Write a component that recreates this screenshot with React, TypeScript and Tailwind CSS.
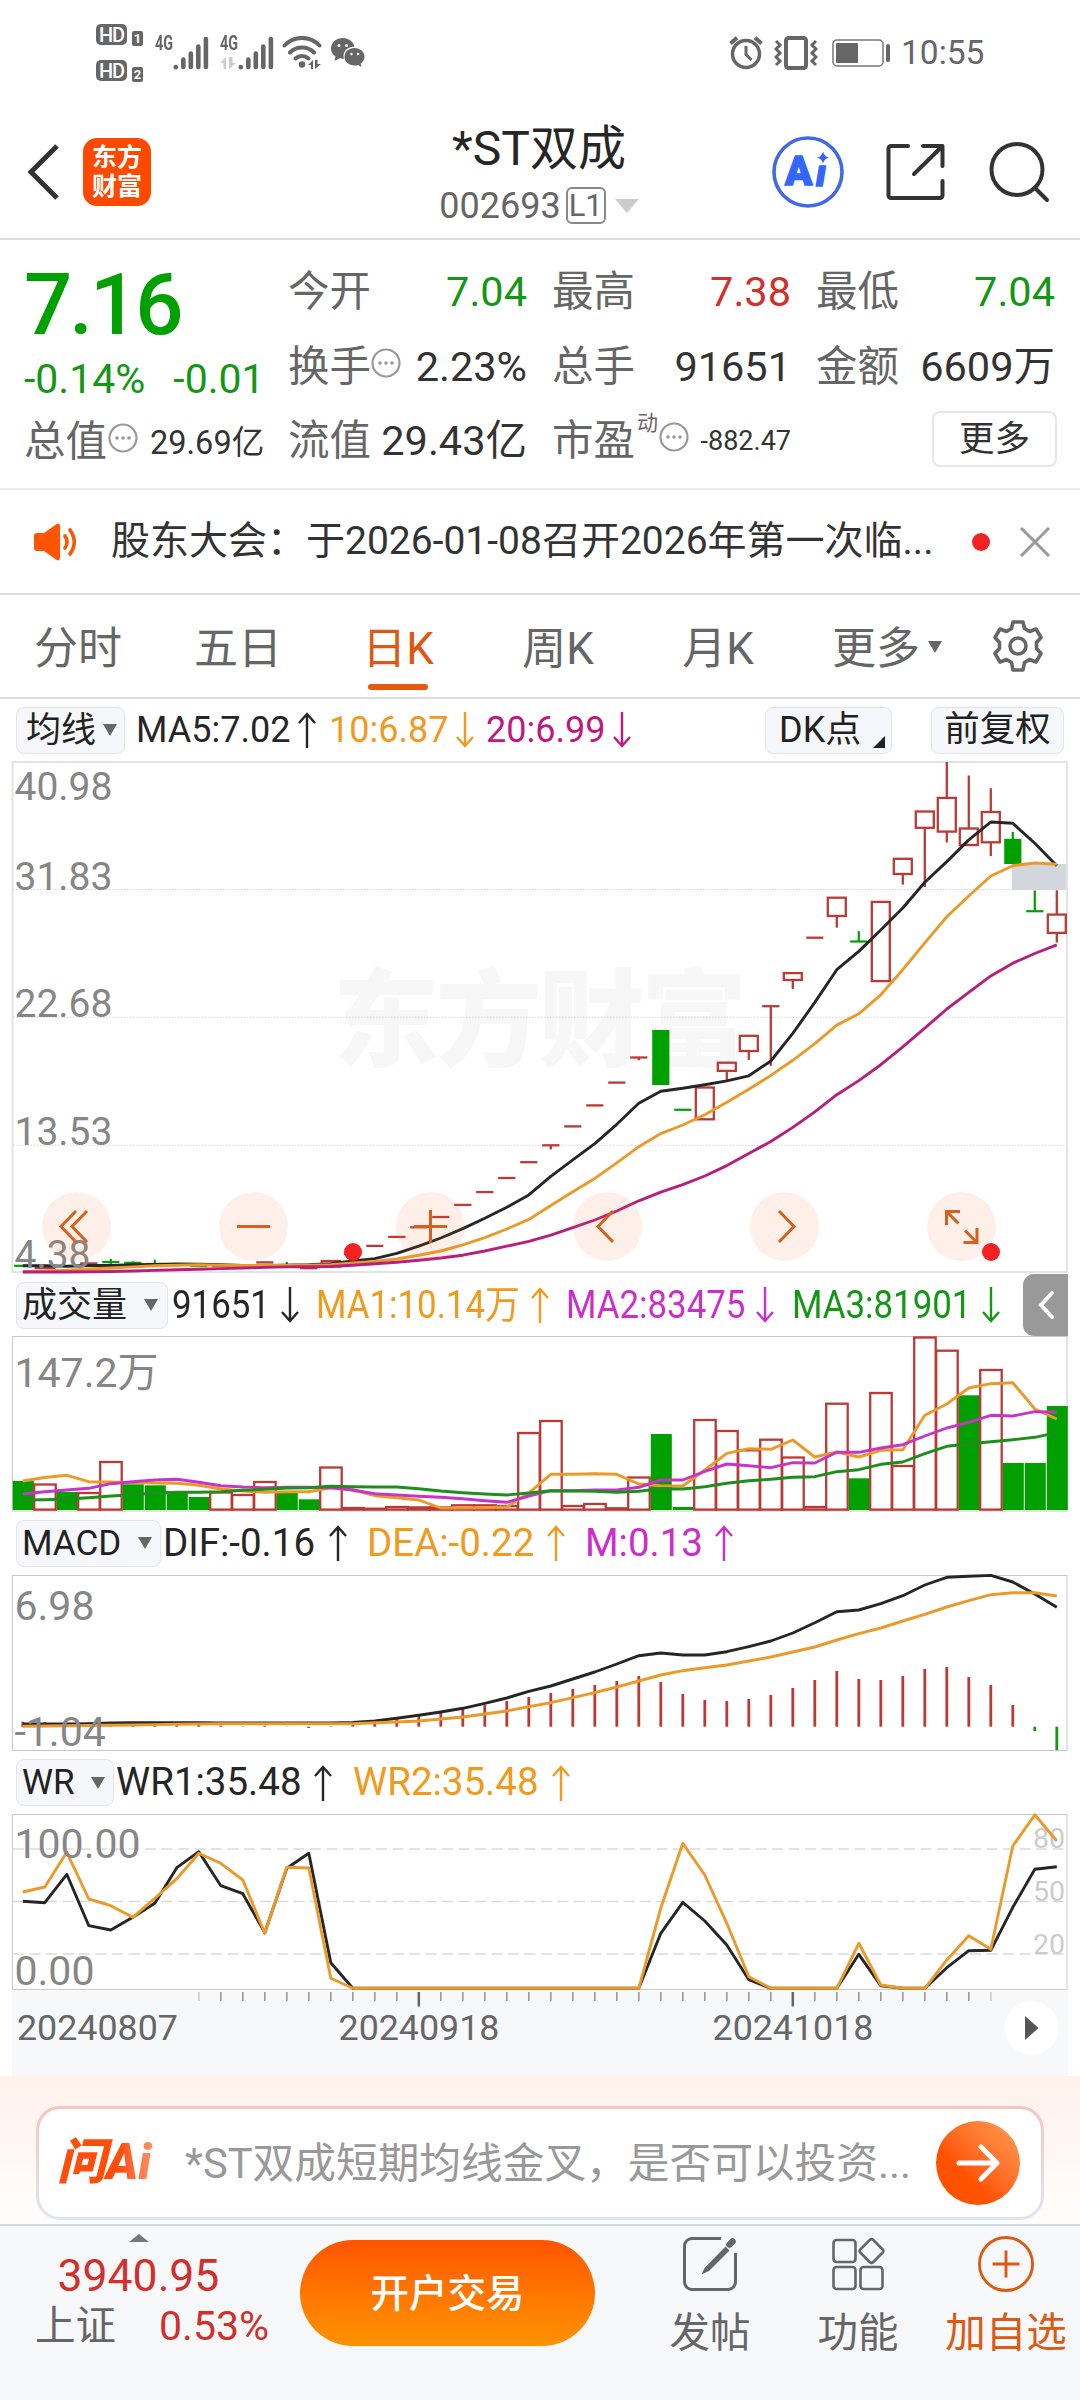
import type { ReactNode } from "react";

const X0 = 22.8;
const STEP = 22;
const cx = (i: number) => X0 + STEP * i;

const RED = "#bb3a36";
const GREEN = "#00a000";
const BLACK = "#262626";
const ORANGE = "#eb9a2a";
const MAGENTA = "#b81e7c";
const PURPLE = "#c735c7";

// [index, up, bodyTop, bodyBottom, high, low]
type Candle = [number, boolean, number, number, number, number];

const candles: Candle[] = [
  [0, false, 1265.8, 1265.8, 1265.8, 1265.8],
  [1, true, 1266, 1268, 1266, 1268],
  [2, false, 1265.5, 1267, 1265.5, 1267],
  [3, true, 1263.4, 1263.4, 1263.4, 1263.4],
  [4, false, 1262, 1262, 1259, 1265],
  [5, false, 1262.8, 1262.8, 1261.5, 1264],
  [6, false, 1264, 1264, 1259.6, 1266],
  [7, false, 1265, 1265, 1263, 1266],
  [8, false, 1266, 1266.6, 1266, 1267],
  [9, true, 1266, 1266, 1266, 1266],
  [10, true, 1265.5, 1265.5, 1265.5, 1265.5],
  [11, true, 1262.4, 1263, 1262.4, 1263],
  [12, false, 1265, 1265, 1262, 1266],
  [13, true, 1268.2, 1268.2, 1268.2, 1268.2],
  [14, true, 1261, 1266.5, 1261, 1266.5],
  [15, true, 1254, 1254, 1254, 1254],
  [16, true, 1245.9, 1245.9, 1245.9, 1245.9],
  [17, true, 1236.9, 1236.9, 1236.9, 1236.9],
  [18, true, 1227.3, 1227.3, 1227.3, 1227.3],
  [19, true, 1217, 1217, 1217, 1217],
  [20, true, 1204.9, 1204.9, 1204.9, 1204.9],
  [21, true, 1192.1, 1192.1, 1192.1, 1192.1],
  [22, true, 1178, 1178, 1178, 1178],
  [23, true, 1162.2, 1162.2, 1162.2, 1162.2],
  [24, true, 1145.3, 1145.3, 1145.3, 1149.4],
  [25, true, 1126.4, 1126.4, 1126.4, 1126.4],
  [26, true, 1105.4, 1105.4, 1105.4, 1105.4],
  [27, true, 1082.6, 1082.6, 1082.6, 1082.6],
  [28, true, 1057.5, 1057.5, 1057.5, 1060.3],
  [29, false, 1030, 1085, 1030, 1085],
  [30, false, 1109.8, 1109.8, 1109.8, 1109.8],
  [31, true, 1087.5, 1119.3, 1087.5, 1119.3],
  [32, true, 1062.7, 1070.9, 1062.7, 1079.9],
  [33, true, 1035.8, 1051, 1035.8, 1059.9],
  [34, true, 1006.2, 1006.2, 1006.2, 1065.8],
  [35, true, 973.1, 980, 973.1, 989],
  [36, true, 937.7, 937.7, 937.7, 937.7],
  [37, true, 897.7, 916, 897.7, 927.7],
  [38, false, 941.5, 941.5, 931.1, 941.5],
  [39, true, 901.9, 981.1, 901.9, 981.1],
  [40, true, 858.8, 874, 858.8, 884.6],
  [41, true, 811.5, 827.8, 811.5, 887],
  [42, true, 797.9, 831.6, 762, 842.6],
  [43, true, 828.5, 845, 775.5, 845],
  [44, true, 812, 842.3, 788.2, 856],
  [45, false, 838.8, 864, 832, 864],
  [46, false, 911.2, 911.2, 890.5, 911.2],
  [47, true, 914.6, 932.9, 890.2, 942.5],
];

const ma5 = [
  1265.8, 1265.6, 1266.2, 1265.5, 1265.5, 1264.8, 1264.5, 1264, 1264.2, 1264.8, 1265.5, 1265.5, 1265.2, 1264.8, 1263.8,
  1261, 1258.6, 1253.4, 1246.2, 1238, 1228.6, 1218.3, 1207.3, 1194.9, 1176.3, 1159.8, 1143.6, 1124.3, 1103.3, 1091.2,
  1088.2, 1084.7, 1080.9, 1075.8, 1061, 1033.4, 1002.4, 969.7, 951.4, 930, 908, 882.2, 861.6, 839.9, 822, 823.3, 843.3,
  865.7,
];
const ma10 = [
  1271.7, 1271, 1270.3, 1269, 1268, 1266.9, 1265.8, 1265.2, 1264.8, 1265.2, 1265.5, 1265.5, 1265.5, 1265.2, 1264.8, 1263,
  1261.4, 1259, 1255.2, 1251, 1244.8, 1237.6, 1229, 1219.4, 1205.6, 1191.8, 1178.4, 1162.9, 1146.7, 1133.6, 1125, 1114.7,
  1102.3, 1089.2, 1075.4, 1060.3, 1043.7, 1025.1, 1013.8, 994.8, 969.7, 942.8, 916.7, 896, 876, 865.7, 863, 864.3,
];
const ma20 = [
  1272, 1272, 1272, 1271.8, 1271.5, 1271, 1270.4, 1269.8, 1269.3, 1268.6, 1268, 1267.4, 1266.9, 1266.7, 1266.5, 1265.2,
  1263.8, 1262.2, 1260.3, 1258, 1255.2, 1251, 1246.2, 1241.4, 1235.2, 1227.6, 1220, 1211, 1200.8, 1192.1, 1184.6, 1176,
  1165.6, 1153.6, 1141.5, 1127.4, 1111.9, 1094.7, 1080.6, 1064.7, 1046.8, 1028.2, 1009, 992.4, 975.9, 963.2, 953.5, 944.9,
];

// volume bars: top of bar, true = hollow red
const volumes: [number, boolean][] = [
  [1481, false], [1484.5, true], [1492, false], [1493, true], [1462, true], [1484.3, false], [1485.3, false],
  [1491, false], [1497, false], [1492.5, true], [1495, true], [1482, true], [1492, false], [1499.3, false],
  [1467.5, true], [1508, true], [1508.7, true], [1507, true], [1507.4, true], [1507.4, true], [1505.3, true],
  [1505.3, true], [1506, true], [1433, true], [1421, true], [1506, true], [1504, true], [1508.3, true],
  [1477.5, true], [1434, false], [1507, false], [1420, true], [1431, true], [1450.3, true], [1439.7, true],
  [1457.5, true], [1507, true], [1403.7, true], [1478.3, false], [1393, true], [1466, true], [1335, true],
  [1350.7, true], [1395.3, false], [1370, true], [1463, false], [1463, false], [1406, false],
];
const vma1 = [
  1481, 1477.5, 1475.3, 1481.7, 1482, 1482.6, 1483, 1483.3, 1485.3, 1489, 1491, 1492.3, 1491.7, 1491.7, 1487.7, 1490,
  1495.7, 1497.7, 1500, 1508, 1508, 1507.7, 1507, 1493, 1474.3, 1474.3, 1473.7, 1474.3, 1484, 1485.7, 1486, 1470, 1453.3,
  1448.7, 1449.3, 1440, 1457, 1452, 1457, 1450.3, 1449.7, 1415.3, 1404, 1388, 1383.7, 1382.7, 1409, 1419,
];
const vma2 = [
  1494, 1491.7, 1490, 1488.3, 1483.7, 1481.7, 1480, 1479.3, 1482.3, 1485.7, 1487, 1487.7, 1487.3, 1487.3, 1487.7, 1490,
  1493.7, 1495, 1496.3, 1497.3, 1498.7, 1500.7, 1502.3, 1496, 1490.7, 1490.7, 1490, 1490, 1487.3, 1480, 1480, 1471.3,
  1464, 1465.7, 1467.7, 1462.7, 1463, 1452.3, 1452.3, 1448, 1444.7, 1436, 1428, 1422.3, 1415.3, 1416, 1411.7, 1412,
];
const vma3 = [
  1500, 1499.7, 1499, 1497.7, 1496, 1494.7, 1493.3, 1492.3, 1492.3, 1491.7, 1490.3, 1489.3, 1488, 1487.7, 1486.3, 1486.7,
  1487, 1487, 1488.7, 1491, 1492.7, 1494, 1495, 1493, 1490.7, 1491, 1491.3, 1492.3, 1491.3, 1488.7, 1489, 1486.7, 1483.3,
  1480.7, 1479.3, 1477.3, 1476.7, 1471.7, 1469.7, 1464.3, 1462, 1453.7, 1446.3, 1444, 1441.7, 1439.7, 1437.3, 1432.7,
];

const dif = [
  1724, 1724, 1724, 1723.6, 1723, 1722.8, 1722.7, 1722.7, 1722.7, 1723, 1723, 1723, 1723, 1723, 1723, 1722.5, 1721,
  1718.3, 1715.3, 1712, 1708.3, 1703.3, 1698, 1691.3, 1686, 1679, 1672, 1664, 1655.7, 1653, 1655, 1655, 1651.7, 1646.7,
  1641, 1633, 1622.7, 1611.7, 1610, 1603.7, 1595.7, 1585, 1577.3, 1576.3, 1575.4, 1582, 1594, 1607.3,
];
const dea = [
  1726.3, 1726, 1725.8, 1725.5, 1725.3, 1725, 1724.6, 1724.2, 1724, 1723.8, 1723.7, 1723.7, 1723.7, 1723.7, 1723.7,
  1723.7, 1722.7, 1722, 1721, 1719, 1717, 1714, 1711, 1706.7, 1702.7, 1697.7, 1692.7, 1687, 1681, 1675, 1670.7, 1667.7,
  1665, 1661, 1657, 1652, 1647, 1640, 1633.7, 1628, 1621, 1614.3, 1607, 1600.7, 1594.7, 1592.7, 1592.7, 1596,
];
const ZERO = 1726.7;
const hist = [
  1721.7, 1722.3, 1724, 1723.6, 1723.8, 1724, 1724, 1724.3, 1724.8, 1725.5, 1726.4, 1725.7, 1726.5, 1728, 1726.4, 1725,
  1722, 1719.3, 1716, 1712, 1709, 1705, 1701, 1697, 1693, 1689, 1685, 1681, 1676, 1682, 1694, 1700, 1701, 1699, 1695,
  1688, 1680, 1671, 1679, 1680, 1676, 1669, 1667, 1677, 1685, 1705, 1731, 1750,
];

const B = 1988.3;
const wr1 = [
  1901.3, 1902.7, 1874.3, 1925.7, 1930, 1917.3, 1903.3, 1867.7, 1851.7, 1885.7, 1893.7, 1932.7, 1868.3, 1853.3, 1962.7,
  B, B, B, B, B, B, B, B, B, B, B, B, B, B, 1933.3, 1902.3, 1921, 1945, 1979.7, B, B, B, B, 1954.3, 1985.7, B, B, 1967.7,
  1950.7, 1950.3, 1907.3, 1869.3, 1866.7,
];
const wr2 = [
  1892, 1887, 1852.3, 1899, 1905.7, 1917.3, 1898.3, 1878.7, 1853.3, 1863.3, 1880, 1933.3, 1867.3, 1868, 1978.3, B, B, B,
  B, B, B, B, B, B, B, B, B, B, B, 1908, 1843.3, 1875, 1923.3, 1976.7, B, B, B, B, 1943.3, 1985, B, B, 1960, 1935.7,
  1949.3, 1846, 1814.8, 1841,
];

function Line({ data, color, width = 2.9 }: { data: number[]; color: string; width?: number }) {
  const points = data.map((y, i) => `${cx(i)},${y}`).join(" ");
  return <polyline points={points} fill="none" stroke={color} strokeWidth={width} strokeLinejoin="round" />;
}

function AxisLabel({ x = 14.5, y, size = 41, children }: { x?: number; y: number; size?: number; children: ReactNode }) {
  return (
    <text x={x} y={y} fontSize={size} fill="#868686">
      {children}
    </text>
  );
}

function Arrow({ up }: { up?: boolean }) {
  return (
    <svg viewBox="0 0 18 36" className="h-9 w-[18px] shrink-0" fill="none" stroke="currentColor" strokeWidth="2.4">
      {up ? <path d="M9 36V2M1 11l8-9 8 9" /> : <path d="M9 0v34M1 25l8 9 8-9" />}
    </svg>
  );
}

function Reading({ text, up, className, narrow }: { text: string; up?: boolean; className: string; narrow?: boolean }) {
  return (
    <div className={`flex items-center ${className}`}>
      <div className="w-0 flex-1 whitespace-nowrap">
        <span className={narrow ? "inline-block origin-left scale-x-[0.905]" : ""}>{text}</span>
      </div>
      <Arrow up={up} />
    </div>
  );
}

function Picker({ label, className }: { label: string; className: string }) {
  return (
    <button
      className={`mr-1 flex h-[47px] shrink-0 items-center justify-between rounded-lg border-[1.5px] border-[#e1e4ea] bg-[#f5f7fa] text-[35px] leading-none text-[#222] ${className}`}
    >
      {label}
      <svg viewBox="0 0 14 12" className="h-3 w-3.5" fill="#666">
        <path d="M0 0h14L7 12z" />
      </svg>
    </button>
  );
}

function More() {
  return (
    <svg viewBox="0 0 30 30" className="h-[30px] w-[30px] shrink-0">
      <circle cx="15" cy="15" r="13.5" fill="none" stroke="#999" strokeWidth="2.2" />
      <circle cx="9" cy="15" r="1.8" fill="#999" />
      <circle cx="15" cy="15" r="1.8" fill="#999" />
      <circle cx="21" cy="15" r="1.8" fill="#999" />
    </svg>
  );
}

function Signal() {
  return (
    <svg viewBox="0 0 36 34" className="h-[34px] w-9" stroke="#666" strokeWidth="4.6" strokeLinecap="round">
      <path d="M2.8 31v.2M10.3 23.5V31M17.8 17.5V31M25.3 10.5V31M32.9 3v28" />
    </svg>
  );
}

function HdBadge({ n }: { n: number }) {
  return (
    <div className="flex items-end gap-[5px]">
      <span className="flex h-[21px] w-[31px] items-center justify-center rounded-[5px] bg-[#666] text-[20px] leading-none font-medium tracking-[-1px] text-white">
        HD
      </span>
      <span className="-mb-px flex h-[15px] w-[11px] items-center justify-center rounded-[2px] bg-[#666] text-[13px] leading-none font-bold text-white">
        {n}
      </span>
    </div>
  );
}

function StatusBar() {
  return (
    <div className="flex h-[106px] items-start text-[#666]">
      <div className="mt-6 ml-24 flex flex-col gap-[15px]">
        <HdBadge n={1} />
        <HdBadge n={2} />
      </div>
      <div className="mt-9 ml-3 flex">
        <span className="w-[18px] origin-left scale-x-[0.72] text-[20px] leading-[15px] font-bold">4G</span>
        <Signal />
      </div>
      <div className="mt-9 ml-[11px] flex">
        <div className="w-[18px]">
          <span className="block origin-left scale-x-[0.72] text-[20px] leading-[15px] font-bold">4G</span>
          <svg viewBox="0 0 16 12" className="mt-[6px] h-3 w-4" fill="#ccc">
            <path d="M0 6l6-6v12H3.5V6zM9 0v12l7-6h-3.500V0z" />
          </svg>
        </div>
        <Signal />
      </div>
      <svg viewBox="0 0 40 34" className="mt-9 ml-2 h-[34px] w-10" fill="none" stroke="#666" strokeWidth="4" strokeLinecap="round">
        <path d="M2.500 9.500a24 24 0 0 1 35 0M8 16.500a17 17 0 0 1 24 0M13.500 22.500a9.500 9.500 0 0 1 13 0" />
        <circle cx="20" cy="28.500" r="3.200" fill="#666" stroke="none" />
        <path d="M26 29l5-5v9h-2v-4zM33 24v9l6-5h-3.500v-4z" fill="#666" stroke="none" />
      </svg>
      <svg viewBox="0 0 34 30" className="mt-[38px] ml-[9px] h-[30px] w-[34px]" fill="#666">
        <path d="M12 0C5 0 0 4.700 0 10.500c0 3.500 1.800 6 4.500 8L3.500 23l5-2.700c2 .5 4 .5 4.500.4C11 14 16 8.500 23.500 8.700 22.500 3.500 17.500 0 12 0z" />
        <path d="M23.500 10c-5.600 0-10 3.800-10 8.700s4.400 8.800 10 8.800c1.300 0 2.500-.2 3.600-.6l3.400 2.100-.8-3.500c2.300-1.600 3.800-4 3.800-6.800 0-4.900-4.400-8.700-10-8.700z" />
        <circle cx="8" cy="7.500" r="1.500" fill="#fff" />
        <circle cx="15.500" cy="7.500" r="1.500" fill="#fff" />
        <circle cx="20.500" cy="16" r="1.200" fill="#fff" />
        <circle cx="27" cy="16" r="1.200" fill="#fff" />
      </svg>
      <div className="flex-1" />
      <svg viewBox="0 0 34 34" className="mt-9 h-[34px] w-[34px]" fill="none" stroke="#666" strokeWidth="3.500">
        <circle cx="17" cy="18" r="13.500" />
        <path d="M17 10v8.500l5.500 5.500" strokeWidth="3" />
        <path d="M1.500 7.500L8 1.800M32.500 7.500L26 1.800" strokeWidth="4" />
      </svg>
      <svg viewBox="0 0 44 34" className="mt-9 ml-[11px] h-[34px] w-11" fill="none" stroke="#666">
        <rect x="12" y="2" width="20" height="30" rx="2.500" strokeWidth="4" />
        <path d="M2 5l4 4-4 4 4 4-4 4 4 4-4 4M42 5l-4 4 4 4-4 4 4 4-4 4 4 4" strokeWidth="3" />
      </svg>
      <svg viewBox="0 0 58 28" className="mt-[39px] ml-[14px] h-7 w-[58px]" fill="#666">
        <rect x="1" y="1" width="50" height="26" rx="4" fill="none" stroke="#777" strokeWidth="1.500" />
        <rect x="4" y="4" width="22" height="20" rx="1" />
        <rect x="54" y="5" width="4" height="18" rx="2" />
      </svg>
      <span className="mt-9 mr-[97px] ml-[11px] w-[82px] text-[33.500px] leading-[34px]">10:55</span>
    </div>
  );
}

function Header() {
  return (
    <header className="flex h-[134px] items-center border-b-2 border-[#dcdcdc] pl-[26px]">
      <svg viewBox="0 0 34 56" className="h-14 w-[34px]" fill="none" stroke="#333" strokeWidth="5">
        <path d="M31 2L5 28l26 26" />
      </svg>
      <div className="ml-[23px] flex h-[68px] w-[68px] flex-col items-center justify-center rounded-[14px] bg-[#ff4800] text-[25px] leading-[29px] font-bold text-white">
        <span>东方</span>
        <span>财富</span>
      </div>
      <div className="ml-[241px] flex w-[294px] flex-col items-center pt-[9px]">
        <h1 className="text-[48px] leading-[58px] text-[#262626]">*ST双成</h1>
        <div className="flex h-[56px] items-center text-[#666]">
          <span className="text-[36px]">002693</span>
          <span className="ml-[5px] flex h-[37px] w-[40px] items-center justify-center rounded-md border-2 border-[#888] text-[31px] leading-none">
            L1
          </span>
          <svg viewBox="0 0 24 14" className="ml-[9px] h-3.5 w-6" fill="#ccc">
            <path d="M0 0h24L12 14z" />
          </svg>
        </div>
      </div>
      <svg viewBox="0 0 74 74" className="ml-[85px] h-[74px] w-[74px]">
        <circle cx="37" cy="37" r="34" fill="none" stroke="#4169e1" strokeWidth="3.600" />
        <text x="14" y="50" fontSize="40" fontWeight="900" fill="#3366ff" stroke="#3366ff" strokeWidth="1.500">
          A
        </text>
        <text x="45" y="51" fontSize="36" fontWeight="900" fontStyle="italic" fill="#3366ff" stroke="#3366ff" strokeWidth="1.500">
          ı
        </text>
        <path d="M52 16.500q1.500 5.500 6 6-4.500 1-6 6-1.500-5-6-6 4.500-.5 6-6z" fill="#3366ff" />
      </svg>
      <svg viewBox="0 0 60 60" className="ml-[40px] h-[60px] w-[60px]" fill="none" stroke="#333" strokeWidth="4" strokeLinecap="round" strokeLinejoin="round">
        <path d="M23 4H6a2.500 2.500 0 0 0-2.500 2.500v47A2.500 2.500 0 0 0 6 56h49a2.500 2.500 0 0 0 2.500-2.500V39" />
        <path d="M38 4h19.500v20M57 4.500L29 32" />
      </svg>
      <svg viewBox="0 0 62 62" className="ml-[43px] h-[62px] w-[62px]" fill="none" stroke="#333" strokeWidth="4" strokeLinecap="round">
        <circle cx="29" cy="28.500" r="25.500" />
        <path d="M47 47l12 12" />
      </svg>
    </header>
  );
}

function Cell({ label, value, color = "text-[#333]", more }: { label: string; value: string; color?: string; more?: boolean }) {
  return (
    <div className="flex h-[74.5px] w-[239px] items-center justify-between">
      <span className="flex items-center text-[#666]">
        {label}
        {more && (
          <span className="-mt-2">
            <More />
          </span>
        )}
      </span>
      <span className={color}>{value}</span>
    </div>
  );
}

function Quote() {
  return (
    <section className="flex h-[250px] border-b-2 border-[#ececec] pl-6 text-[41.500px] leading-[50px]">
      <div className="w-[264px] text-[#00a000]">
        <div className="mt-[20px] h-[90px] text-[85px] leading-[90px] font-medium tracking-[-3px]">7.16</div>
        <div className="mt-1 flex gap-7 text-[41px] text-[#149714]">
          <span>-0.14%</span>
          <span>-0.01</span>
        </div>
        <div className="mt-[12px] flex items-center text-[#666]">
          总值
          <span className="-mt-2 ml-px">
            <More />
          </span>
          <span className="mt-[2px] ml-3 text-[32.500px] text-[#333]">29.69亿</span>
        </div>
      </div>
      <div className="mt-[15px] w-[264px]">
        <Cell label="今开" value="7.04" color="text-[#149714]" />
        <Cell label="换手" value="2.23%" more />
        <Cell label="流值" value="29.43亿" />
      </div>
      <div className="mt-[15px] w-[264px]">
        <Cell label="最高" value="7.38" color="text-[#d2302c]" />
        <Cell label="总手" value="91651" />
        <div className="flex h-[74.5px] w-[239px] items-center text-[#666]">
          市盈
          <span className="mb-9 ml-0.5 text-[21px] leading-none">动</span>
          <span className="-mt-2 ml-[1px]">
            <More />
          </span>
          <span className="ml-auto text-[27px] text-[#333]">-882.47</span>
        </div>
      </div>
      <div className="mt-[15px]">
        <Cell label="最低" value="7.04" color="text-[#149714]" />
        <Cell label="金额" value="6609万" />
        <div className="flex w-[241px] justify-end pt-[7px]">
          <button className="h-[56px] w-[125px] rounded-lg border-2 border-[#e6e7ea] text-[35.500px] leading-[52px] text-[#333]">更多</button>
        </div>
      </div>
    </section>
  );
}

function Notice() {
  return (
    <div className="flex h-[105px] items-center border-b-2 border-[#dcdcdc] pl-[34px]">
      <svg viewBox="0 0 46 38" className="h-[38px] w-[46px]" fill="#ff5500">
        <path d="M0 13q0-3 3-3h7L22 1.500q4-2.500 4 2v31q0 4.500-4 2L10 28H3q-3 0-3-3z" />
        <path d="M31 13q4 6 0 12M36 7q8.500 12 0 24" fill="none" stroke="#ff5500" strokeWidth="3.600" strokeLinecap="round" />
      </svg>
      <p className="ml-[31px] w-[830px] text-[39px] whitespace-nowrap text-[#333]">股东大会：于2026-01-08召开2026年第一次临...</p>
      <span className="ml-[31px] h-[18px] w-[18px] rounded-full bg-[#f02222]" />
      <svg viewBox="0 0 30 30" className="ml-[30px] h-[30px] w-[30px]" stroke="#999" strokeWidth="3">
        <path d="M1 1l28 28M29 1L1 29" />
      </svg>
    </div>
  );
}

const tabs = ["分时", "五日", "日K", "周K", "月K"];

function Tabs() {
  return (
    <nav className="flex h-[104px] border-b-2 border-[#dcdcdc] text-[44px] text-[#666]">
      <div className="-ml-0.5 flex">
        {tabs.map((tab) => (
          <div key={tab} className="flex w-[160px] flex-col items-center">
            <span className={tab === "日K" ? "leading-[108px] text-[#e0570f]" : "leading-[108px]"}>{tab}</span>
            {tab === "日K" && <span className="-mt-[19px] h-[6px] w-[60px] rounded-full bg-[#e6590f]" />}
          </div>
        ))}
      </div>
      <div className="ml-[34px] flex h-[104px] items-start gap-2">
        <span className="leading-[108px]">更多</span>
        <svg viewBox="0 0 14 12" className="mt-[46px] h-3 w-3.5" fill="#666">
          <path d="M0 0h14L7 12z" />
        </svg>
      </div>
      <svg viewBox="0 0 52 52" className="mt-[25px] ml-[50px] h-[52px] w-[52px]" fill="none" stroke="#666" strokeWidth="3.600" strokeLinejoin="round">
        <path d="M21 2h10l1.500 6.500 5 3 6.500-2.500 5 8.500-4.500 5v6l4.500 5-5 8.500-6.500-2.500-5 3L31 50H21l-1.500-7.500-5-3L8 42l-5-8.500 4.500-5v-6L3 17.500 8 9l6.500 2.500 5-3z" />
        <circle cx="26" cy="26" r="8" />
      </svg>
    </nav>
  );
}

function MaBar() {
  return (
    <div className="flex h-[62px] items-center pl-4 text-[36px] leading-none">
      <Picker label="均线" className="w-[109px] pr-[7px] pl-[9px]" />
      <Reading text="MA5:7.02" up className="ml-[7px] w-[180px] text-[#262626]" />
      <Reading text="10:6.87" className="ml-[13px] w-[145px] text-[#f09a1e]" />
      <Reading text="20:6.99" className="ml-[12px] w-[145px] text-[#c01880]" />
      <button className="ml-auto flex h-[47px] w-[127px] items-center rounded-lg border-[1.500px] border-[#e1e4ea] bg-[#f5f7fa] pl-[13px] text-[36px] text-[#222]">
        DK点
        <svg viewBox="0 0 12 12" className="mt-6 ml-[12px] h-3 w-3" fill="#222">
          <path d="M12 0v12H0z" />
        </svg>
      </button>
      <button className="mr-[16px] ml-[39px] h-[47px] w-[133px] rounded-lg border-[1.500px] border-[#e1e4ea] bg-[#f5f7fa] text-[35.500px] text-[#222]">
        前复权
      </button>
    </div>
  );
}

const controls: { name: string; icon: ReactNode }[] = [
  { name: "first", icon: <path d="M34 19L19 34.500 34 50M45 19L30 34.500 45 50" /> },
  { name: "zoom out", icon: <path d="M18 34.500h33" /> },
  { name: "zoom in", icon: <path d="M18 34.500h33M34.500 18v33" /> },
  { name: "previous", icon: <path d="M40 19L25 34.500 40 50" /> },
  { name: "next", icon: <path d="M29 19l15 15.500L29 50" /> },
  { name: "full screen", icon: <path d="M19.500 33V19.500H33M20 20l11.500 11.500M50 36v14.500H36.500M49.500 50L38 38.500" /> },
];

function MainChart() {
  return (
    <div className="relative h-[513px]">
      <svg viewBox="0 761 1080 513" className="block h-[513px] w-[1080px] overflow-visible">
        <text x="333" y="1058" fontSize="106" fontWeight="900" textLength="414" fill="#f7f7f7">
          东方财富
        </text>
        <rect x="12.500" y="762" width="1054.500" height="510" fill="none" stroke="#e3e3e3" strokeWidth="2" />
        {[889.5, 1017.3, 1145.3].map((y) => (
          <line key={y} x1="13" x2="1066" y1={y} y2={y} stroke="#d6d6d6" strokeDasharray="1.500 1.500" />
        ))}
        {candles.map(([i, up, top, bottom, high, low]) => {
          const c = cx(i);
          const flat = bottom - top < 1;
          if (!up) {
            return (
              <g key={i} fill={GREEN}>
                <rect x={c - 1.1} y={high} width="2.200" height={low - high} />
                <rect x={c - 8.6} y={flat ? top - 1.1 : top} width="17.200" height={flat ? 2.2 : bottom - top} />
              </g>
            );
          }
          return (
            <g key={i} fill="none" stroke={RED} strokeWidth="2.300">
              {flat ? <path d={`M${c - 8.6} ${top}h17.2`} /> : <rect x={c - 9} y={top} width="18" height={bottom - top} />}
              <path d={`M${c} ${high}V${top}M${c} ${bottom}V${low}`} />
            </g>
          );
        })}
        <rect x="1012" y="864" width="54" height="26" fill="#d3d6dc" />
        <Line data={ma5} color={BLACK} />
        <Line data={ma10} color={ORANGE} />
        <Line data={ma20} color={MAGENTA} />
        <AxisLabel y={800} size={39}>40.98</AxisLabel>
        <AxisLabel y={890} size={39}>31.83</AxisLabel>
        <AxisLabel y={1017} size={39}>22.68</AxisLabel>
        <AxisLabel y={1145} size={39}>13.53</AxisLabel>
        <AxisLabel y={1268} size={39}>4.38</AxisLabel>
      </svg>
      <div className="absolute top-[431px] left-[42px] flex gap-[108px]">
        {controls.map(({ name, icon }) => (
          <button key={name} aria-label={name} className="h-[69px] w-[69px] rounded-full bg-[#f4702a]/10">
            <svg viewBox="0 0 69 69" className="h-[69px] w-[69px]" fill="none" stroke="#d9601c" strokeWidth="3">
              {icon}
            </svg>
          </button>
        ))}
      </div>
      <span className="absolute top-[482px] left-[344px] h-[18px] w-[18px] rounded-full bg-[#f02222]" />
      <span className="absolute top-[482px] left-[982px] h-[18px] w-[18px] rounded-full bg-[#f02222]" />
    </div>
  );
}

function VolumeChart() {
  return (
    <>
      <div className="flex h-[62px] items-center pl-4 text-[38.500px] leading-none">
        <Picker label="成交量" className="w-[152px] pr-[9px] pl-[5px]" />
        <Reading narrow text="91651" className="w-[127px] text-[#262626]" />
        <Reading narrow text="MA1:10.14万" up className="ml-[17px] w-[233px] text-[#f09a1e]" />
        <Reading narrow text="MA2:83475" className="ml-[17px] w-[208px] text-[#cb2ecb]" />
        <Reading narrow text="MA3:81901" className="ml-[18px] w-[208px] text-[#149714]" />
        <button aria-label="collapse" className="ml-auto mr-[12px] h-[62px] w-[45px] rounded-l-[11px] bg-[#999] pl-[15px]">
          <svg viewBox="0 0 17 30" className="h-[30px] w-[17px]" fill="none" stroke="#fff" strokeWidth="4" strokeLinecap="round">
            <path d="M14 3L3 15l11 12" />
          </svg>
        </button>
      </div>
      <svg viewBox="0 1336 1080 176" className="block h-[176px] w-[1080px] overflow-visible">
        <rect x="12.500" y="1336.500" width="1054.500" height="174.500" fill="none" stroke="#c8c8c8" />
        {volumes.map(([top, up], i) =>
          up ? (
            <rect
              key={i}
              x={cx(i) - 10.6}
              y={i === 41 ? 1337.5 : top}
              width="21.500"
              height={1509.6 - Math.max(top, 1337.5)}
              fill="#fff"
              stroke={RED}
              strokeWidth="2.300"
            />
          ) : (
            <rect key={i} x={cx(i) - 10} y={top} width="21" height={1510 - top} fill={GREEN} />
          ),
        )}
        <Line data={vma1} color={ORANGE} />
        <Line data={vma2} color={PURPLE} />
        <Line data={vma3} color="#1c8f1c" />
        <AxisLabel y={1386.5}>147.2万</AxisLabel>
      </svg>
    </>
  );
}

function MacdChart() {
  return (
    <>
      <div className="flex h-[62px] items-center pl-4 text-[38.500px] leading-none">
        <Picker label="MACD" className="w-[145px] pr-[8px] pl-[5px]" />
        <Reading text="DIF:-0.16" up className="-ml-[2px] w-[184px] text-[#262626]" />
        <Reading text="DEA:-0.22" up className="ml-[20px] w-[198px] text-[#f09a1e]" />
        <Reading text="M:0.13" up className="ml-[20px] w-[148px] text-[#cb2ecb]" />
      </div>
      <svg viewBox="0 1574 1080 178" className="block h-[178px] w-[1080px] overflow-visible">
        <rect x="12.500" y="1575.500" width="1054.500" height="175" fill="none" stroke="#c8c8c8" />
        {hist.map((y, i) => (
          <line key={i} x1={cx(i)} x2={cx(i)} y1={ZERO} y2={y} stroke={y > ZERO ? "#149714" : RED} strokeWidth="2.800" />
        ))}
        <Line data={dif} color={BLACK} />
        <Line data={dea} color={ORANGE} />
        <AxisLabel y={1620}>6.98</AxisLabel>
        <AxisLabel y={1745.5}>-1.04</AxisLabel>
      </svg>
    </>
  );
}

function WrChart() {
  return (
    <>
      <div className="flex h-[61px] items-center pl-4 text-[38.500px] leading-none">
        <Picker label="WR" className="w-[98px] pr-[8px] pl-[5px]" />
        <Reading text="WR1:35.48" up className="-ml-[2px] w-[216px] text-[#262626]" />
        <Reading text="WR2:35.48" up className="ml-[21px] w-[217px] text-[#f09a1e]" />
      </div>
      <svg viewBox="0 1813 1080 178" className="block h-[178px] w-[1080px] overflow-visible">
        <rect x="12.500" y="1814.500" width="1054.500" height="175" fill="none" stroke="#c8c8c8" />
        {[1849, 1901.5, 1954].map((y) => (
          <line key={y} x1="13" x2="1066" y1={y} y2={y} stroke="#dadada" strokeWidth="1.600" strokeDasharray="11 5.500" />
        ))}
        <g fontSize="28.500" fill="#cccccc" textAnchor="end">
          <text x="1065" y="1848">80</text>
          <text x="1065" y="1901">50</text>
          <text x="1065" y="1954">20</text>
        </g>
        <Line data={wr1} color={BLACK} />
        <Line data={wr2} color={ORANGE} />
        <AxisLabel y={1858}>100.00</AxisLabel>
        <AxisLabel y={1985}>0.00</AxisLabel>
      </svg>
      <svg viewBox="0 1991 1080 85" className="block h-[85px] w-[1080px]">
        <rect x="12" y="1991" width="1056" height="85" fill="#f7f8fa" />
        {Array.from({ length: 37 }, (_, k) => k + 8).map((i) => {
          const major = i === 18 || i === 35;
          const edge = i === 8 || i === 44;
          return (
            <line
              key={i}
              x1={cx(i)}
              x2={cx(i)}
              y1="1992"
              y2={major ? 2006.5 : 2001}
              stroke={edge ? "#ccc" : major ? "#666" : "#999"}
              strokeWidth={major ? 2.5 : 1.6}
            />
          );
        })}
        <g fontSize="35.800" fill="#666">
          <text x="17" y="2039.500">20240807</text>
          <text x="419" y="2039.500" textAnchor="middle">20240918</text>
          <text x="793" y="2039.500" textAnchor="middle">20241018</text>
        </g>
        <circle cx="1031.500" cy="2028" r="27" fill="#fff" />
        <path d="M1025 2016l13.500 12-13.500 12z" fill="#555" />
      </svg>
    </>
  );
}

function AskBar() {
  return (
    <div className="h-[148px] bg-linear-to-b from-[#fff1ec] to-[#fffdfc] px-9 pt-[30px]">
      <div className="h-[114px] rounded-[24px] bg-linear-to-b from-[#f5c5bd] to-[#dfe6f1] p-[3px]">
        <div className="flex h-[108px] items-center rounded-[21px] bg-white pr-[21px] pl-[18px]">
          <span className="w-[106px] bg-linear-to-r from-[#ff4e0a] from-60% to-[#ffa27a] bg-clip-text text-[49px] leading-[60px] font-black whitespace-nowrap text-transparent italic">
            问Ai
          </span>
          <span className="ml-[22px] flex-1 pt-[2px] text-[41.700px] whitespace-nowrap text-[#999]">*ST双成短期均线金叉，是否可以投资...</span>
          <span className="flex h-[84px] w-[84px] items-center justify-center rounded-full bg-linear-to-tr from-[#ff5200] from-35% to-[#ff9e50]">
            <svg viewBox="0 0 44 40" className="h-10 w-11" fill="none" stroke="#fff" strokeWidth="5" strokeLinecap="round" strokeLinejoin="round">
              <path d="M3 20h37M25 4l16 16-16 16" />
            </svg>
          </span>
        </div>
      </div>
    </div>
  );
}

function BottomBar() {
  return (
    <footer className="flex h-[176px] border-t-2 border-[#d5d9e0] bg-[#f7f8fa] text-[40.500px] leading-[48px] text-[#666]">
      <div className="flex w-[277px] flex-col items-center pt-[8px]">
        <svg viewBox="0 0 20 8" className="h-2 w-5" fill="#777">
          <path d="M10 0l10 8H0z" />
        </svg>
        <span className="mt-[10px] text-[44.500px] text-[#d2302c]">3940.95</span>
        <div className="ml-[27px] flex w-[234px] justify-between pt-[2px]">
          <span>上证</span>
          <span className="text-[41px] text-[#d2302c]">0.53%</span>
        </div>
      </div>
      <button className="mt-[14px] ml-[23px] h-[106px] w-[295px] rounded-full bg-linear-to-b from-[#ff5400] to-[#ff9200] pt-[2px] text-[38.500px] font-medium text-white">
        开户交易
      </button>
      <div className="ml-[41px] flex w-[148px] flex-col items-center pt-[10px]">
        <svg viewBox="0 0 56 56" className="h-14 w-14" fill="none" stroke="#666" strokeWidth="3">
          <path d="M39 2.500H10A7.500 7.500 0 0 0 2.500 10v36a7.500 7.500 0 0 0 7.500 7.500h36a7.500 7.500 0 0 0 7.500-7.500V17" />
          <path d="M43.500 10.500l4 4L27 35l-7.500 3.500L22.500 32z" fill="#666" stroke="none" />
          <path d="M47.500 8.500l3-3" strokeWidth="6.500" strokeLinecap="round" />
        </svg>
        <span className="mt-[17px]">发帖</span>
      </div>
      <div className="flex w-[148px] flex-col items-center pt-[10px]">
        <svg viewBox="0 0 56 56" className="h-14 w-14" fill="none" stroke="#666" strokeWidth="2.600">
          <rect x="3.500" y="4" width="22" height="22" rx="3" />
          <rect x="3.500" y="31" width="22" height="22" rx="3" />
          <rect x="30.500" y="31" width="22" height="22" rx="3" />
          <rect x="32.500" y="6" width="18" height="18" rx="2.500" transform="rotate(45 41.500 15)" />
        </svg>
        <span className="mt-[17px]">功能</span>
      </div>
      <div className="flex w-[148px] flex-col items-center pt-[10px] text-[#dc5a14]">
        <svg viewBox="0 0 58 58" className="h-14 w-14" fill="none" stroke="currentColor" strokeWidth="3">
          <circle cx="29" cy="29" r="27.500" />
          <path d="M15 29h28M29 15v28" />
        </svg>
        <span className="mt-[17px]">加自选</span>
      </div>
    </footer>
  );
}

export default function App() {
  return (
    <div className="h-[2400px] w-[1080px] overflow-hidden bg-white font-[Roboto,'Noto_Sans_CJK_SC',sans-serif]">
      <StatusBar />
      <Header />
      <Quote />
      <Notice />
      <Tabs />
      <MaBar />
      <MainChart />
      <VolumeChart />
      <MacdChart />
      <WrChart />
      <AskBar />
      <BottomBar />
    </div>
  );
}
